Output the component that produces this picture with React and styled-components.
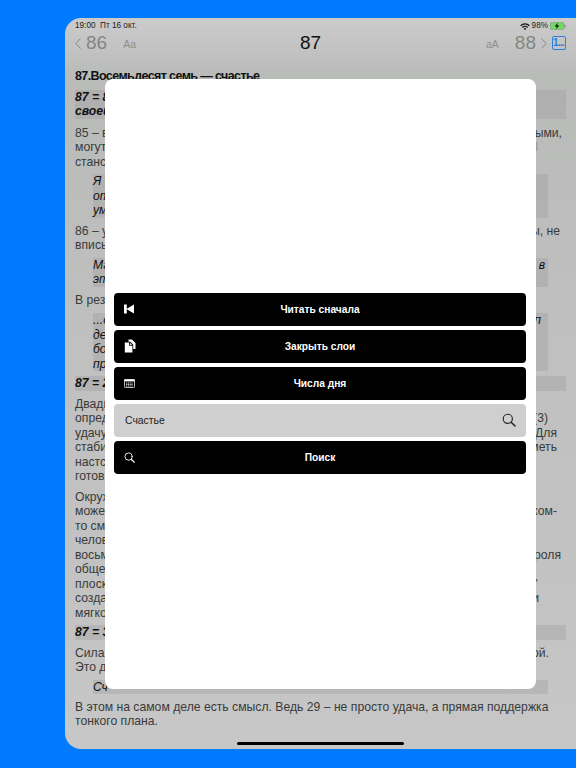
import React from 'react';
import styled, { createGlobalStyle } from 'styled-components';

const GlobalStyle = createGlobalStyle`
  html, body {
    margin: 0;
    padding: 0;
    background: #007aff;
  }
`;

const FONT = '"Liberation Sans", Arial, sans-serif';

const Skip = () => (
  <svg width="10" height="10" viewBox="0 0 10 10" fill="#fff">
    <rect x="0" y="0.5" width="2.8" height="9" />
    <path d="M2.4 5 L10 0.5 V9.5 Z" />
  </svg>
);
const Layers = () => (
  <svg width="12" height="14" viewBox="0 0 12 14" fill="#fff">
    <path d="M4.5 0.5 H8 L11.5 4 V10 H9.2 V5.6 L6.2 2.8 H4.5 Z" />
    <path d="M0.8 3.6 H5.2 V6.8 H8.4 V13.6 H0.8 Z" />
    <path d="M6.1 3.8 L8.1 5.9 H6.1 Z" />
  </svg>
);
const Table = () => (
  <svg width="11" height="9" viewBox="0 0 11 9" fill="none">
    <rect x="0.4" y="0.4" width="10.2" height="8.2" rx="1" stroke="#fff" strokeWidth="0.8" />
    <rect x="0.4" y="0.4" width="10.2" height="2" fill="#fff" />
    <path d="M2 4 H9 M2 5.5 H9 M2 7 H9" stroke="#fff" strokeWidth="0.8" strokeDasharray="1.2 0.6" />
  </svg>
);
const Magnifier = ({ size, color }) => (
  <svg width={size} height={size} viewBox="0 0 14 14" fill="none" stroke={color} strokeWidth="1.15" strokeLinecap="round">
    <circle cx="5.8" cy="5.8" r="4.6" />
    <path d="M9.2 9.2 L13 13" strokeWidth="1.5" />
  </svg>
);
const Wifi = () => (
  <svg width="10" height="7" viewBox="0 0 11 8" fill="#111">
    <path d="M0 2.6 A7.8 7.8 0 0 1 11 2.6 L10 3.7 A6.4 6.4 0 0 0 1 3.7 Z" />
    <path d="M2 4.6 A5 5 0 0 1 9 4.6 L8 5.6 A3.6 3.6 0 0 0 3 5.6 Z" />
    <path d="M3.9 6.5 A2.3 2.3 0 0 1 7.1 6.5 L5.5 8 Z" />
  </svg>
);
const Battery = () => (
  <svg width="16" height="8" viewBox="0 0 16 8">
    <rect x="0.3" y="0.3" width="13.6" height="7.4" rx="1.8" fill="#6fdc5f" stroke="#8a8a8a" strokeWidth="0.6" />
    <rect x="14.4" y="2.6" width="1.2" height="2.8" rx="0.5" fill="#8a8a8a" />
    <path d="M7.9 0.8 L4.6 4.5 H6.8 L6 7.2 L9.4 3.5 H7.2 Z" fill="#111" />
  </svg>
);
const Chevron = ({ flip }) => (
  <ChevronIcon width="6" height="11" viewBox="0 0 6 11" fill="none" stroke="#8a8a8a" strokeWidth="1" $flip={flip}>
    <path d="M5.5 0.5 L0.8 5.5 L5.5 10.5" />
  </ChevronIcon>
);

const App = () => {
  return (
    <Page>
      <GlobalStyle />
      <Screen>
        <StatusBar>
          <span>19:00&nbsp;&nbsp;Пт 16 окт.</span>
          <StatusRight>
            <Wifi />
            <span>98%</span>
            <Battery />
          </StatusRight>
        </StatusBar>
        <NavBar>
          <NavSide>
            <Chevron />
            <PageNum $left>86</PageNum>
            <FontToggle $left>Аа</FontToggle>
          </NavSide>
          <Title>87</Title>
          <NavSide $end>
            <FontToggle>аА</FontToggle>
            <PageNum>88</PageNum>
            <Chevron flip />
            <ListButton>1...</ListButton>
          </NavSide>
        </NavBar>

        <Article>
          <Heading>87.Восемьдесят семь — счастье</Heading>
          <SubHead $top={6}>
            <div>87 = 8</div>
            <div>своей</div>
          </SubHead>
          <Para $top={7}>
            <Line $w={487}><span>85 – в</span><span>ыми,</span></Line>
            <Line $w={463}><span>могут</span><Sliver>l</Sliver></Line>
            <Line><span>станс</span></Line>
          </Para>
          <Quote>
            <Line><span>Я</span></Line>
            <Line><span>от</span></Line>
            <Line><span>ум</span></Line>
          </Quote>
          <Para>
            <Line $w={485}><span>86 – у</span><span>ы, не</span></Line>
            <Line><span>впись</span></Line>
          </Para>
          <Quote>
            <Line $w={452}><span>Ма</span><span>в</span></Line>
            <Line><span>эт</span></Line>
          </Quote>
          <Para>
            <Line><span>В рез</span></Line>
          </Para>
          <Quote $top={6}>
            <Line $w={448}><span>...с</span><span>п</span></Line>
            <Line><span>де</span></Line>
            <Line><span>бо</span></Line>
            <Line><span>пр</span></Line>
          </Quote>
          <SubHead $top={5}>
            <div>87 = 2</div>
          </SubHead>
          <Para>
            <Line><span>Двадц</span></Line>
            <Line $w={473}><span>опред</span><span>(3)</span></Line>
            <Line $w={482}><span>удачу</span><span>Для</span></Line>
            <Line $w={482}><span>стаби</span><span>иметь</span></Line>
            <Line><span>настс</span></Line>
            <Line><span>готов</span></Line>
          </Para>
          <Para>
            <Line><span>Окруж</span></Line>
            <Line $w={482}><span>може</span><span>ком-</span></Line>
            <Line><span>то см</span></Line>
            <Line><span>челов</span></Line>
            <Line $w={486}><span>восьм</span><span>роля</span></Line>
            <Line><span>обще</span></Line>
            <Line $w={463}><span>плоск</span><span>’</span></Line>
            <Line $w={464}><span>созда</span><span>и</span></Line>
            <Line><span>мягко</span></Line>
          </Para>
          <SubHead $top={5}>
            <div>87 = 3</div>
          </SubHead>
          <Para>
            <Line $w={474}><span>Сила</span><span>ой.</span></Line>
            <Line><span>Это д</span></Line>
          </Para>
          <Quote>
            <Line><span>Сч</span></Line>
          </Quote>
          <Para $top={5.5}>
            <Line>В этом на самом деле есть смысл. Ведь 29 – не просто удача, а прямая поддержка</Line>
            <Line>тонкого плана.</Line>
          </Para>
        </Article>

        <Modal>
          <ActionButton><IconSlot><Skip /></IconSlot>Читать сначала</ActionButton>
          <ActionButton><IconSlot><Layers /></IconSlot>Закрыть слои</ActionButton>
          <ActionButton><IconSlot><Table /></IconSlot>Числа дня</ActionButton>
          <SearchField>
            <span>Счастье</span>
            <Magnifier size={14} color="#222" />
          </SearchField>
          <ActionButton><IconSlot><Magnifier size={11} color="#fff" /></IconSlot>Поиск</ActionButton>
        </Modal>
        <HomeBar />
      </Screen>
    </Page>
  );
};
export default App;

const Page = styled.div`
  width: 576px;
  height: 768px;
  padding: 18px 0 19px 65px;
  box-sizing: border-box;
  background: #007aff;
  overflow: hidden;
  font-family: ${FONT};
`;
const Screen = styled.div`
  position: relative;
  height: 100%;
  padding-left: 10px;
  box-sizing: border-box;
  border-radius: 16px 0 0 16px;
  overflow: hidden;
  background: linear-gradient(180deg, #cbcbcb 0%, #b9bbb9 8%, #bfc0bf 45%, #c2c3c2 80%, #c7c7c7 100%);
`;
const StatusBar = styled.div`
  height: 13px;
  padding-right: 10px;
  display: flex;
  align-items: flex-end;
  justify-content: space-between;
  font-size: 8.2px;
  line-height: 10px;
  color: #222;
`;
const StatusRight = styled.div`
  display: flex;
  align-items: center;
  gap: 2px;
`;
const NavBar = styled.div`
  height: 24px;
  padding-right: 10px;
  display: grid;
  grid-template-columns: 1fr auto 1fr;
  align-items: center;
`;
const NavSide = styled.div`
  display: flex;
  align-items: center;
  justify-content: ${(props) => (props.$end ? 'flex-end' : 'flex-start')};
`;
const ChevronIcon = styled.svg`
  flex: none;
  margin: ${(props) => (props.$flip ? '1px 5px 0 5px' : '1px 0 0 0')};
  transform: ${(props) => (props.$flip ? 'scaleX(-1)' : 'none')};
`;
const PageNum = styled.span`
  font-size: 19px;
  color: #858585;
  margin-left: ${(props) => (props.$left ? '5px' : '0')};
`;
const FontToggle = styled.span`
  font-size: 10.5px;
  color: #8f8f8f;
  margin: ${(props) => (props.$left ? '1px 0 0 16px' : '1px 16px 0 0')};
`;
const Title = styled.div`
  font-size: 19px;
  color: #111;
  margin-right: 20px;
`;
const ListButton = styled.div`
  width: 14px;
  height: 14px;
  box-sizing: border-box;
  border: 1px solid #2a7fd8;
  border-radius: 2px;
  color: #2a7fd8;
  font-size: 10px;
  font-weight: 700;
  letter-spacing: -0.8px;
  line-height: 12px;
  overflow: hidden;
  white-space: nowrap;
`;
const Article = styled.div`
  margin-top: 14px;
  font-size: 12.2px;
  line-height: 14.5px;
  color: #3a3a3a;
`;
const Heading = styled.div`
  font-size: 12.5px;
  font-weight: 700;
  letter-spacing: -0.6px;
  color: #111;
  white-space: nowrap;
`;
const SubHead = styled.div`
  width: 491px;
  margin-top: ${(props) => props.$top}px;
  background: rgba(150, 150, 150, 0.3);
  font-weight: 700;
  font-style: italic;
  color: #111;
`;
const Para = styled.div`
  margin-top: ${(props) => props.$top || 6}px;
`;
const Quote = styled.div`
  width: 455px;
  margin: ${(props) => props.$top || 5}px 0 0 18px;
  background: rgba(150, 150, 150, 0.3);
  font-style: italic;
  color: #111;
`;
const Line = styled.div`
  display: flex;
  justify-content: space-between;
  white-space: nowrap;
  width: ${(props) => (props.$w ? `${props.$w}px` : 'auto')};
`;
const Sliver = styled.span`
  opacity: 0.3;
`;
const Modal = styled.div`
  position: absolute;
  left: 40px;
  top: 61px;
  width: 431px;
  height: 610px;
  padding: 0 10px 2px 9px;
  box-sizing: border-box;
  display: flex;
  flex-direction: column;
  justify-content: center;
  gap: 4px;
  background: #fff;
  border-radius: 8px;
`;
const ActionButton = styled.div`
  position: relative;
  height: 33px;
  display: flex;
  align-items: center;
  justify-content: center;
  background: #000;
  border-radius: 4px;
  color: #fff;
  font-size: 10.2px;
  font-weight: 700;
`;
const IconSlot = styled.span`
  position: absolute;
  left: 10px;
  top: 0;
  bottom: 0;
  display: flex;
  align-items: center;
`;
const SearchField = styled.div`
  height: 33px;
  padding: 0 10px 0 11px;
  display: flex;
  align-items: center;
  justify-content: space-between;
  background: #cfcfcf;
  border-radius: 4px;
  color: #222;
  font-size: 10.4px;
`;
const HomeBar = styled.div`
  position: absolute;
  left: 172px;
  bottom: 4px;
  width: 167px;
  height: 3px;
  border-radius: 2px;
  background: #000;
`;
